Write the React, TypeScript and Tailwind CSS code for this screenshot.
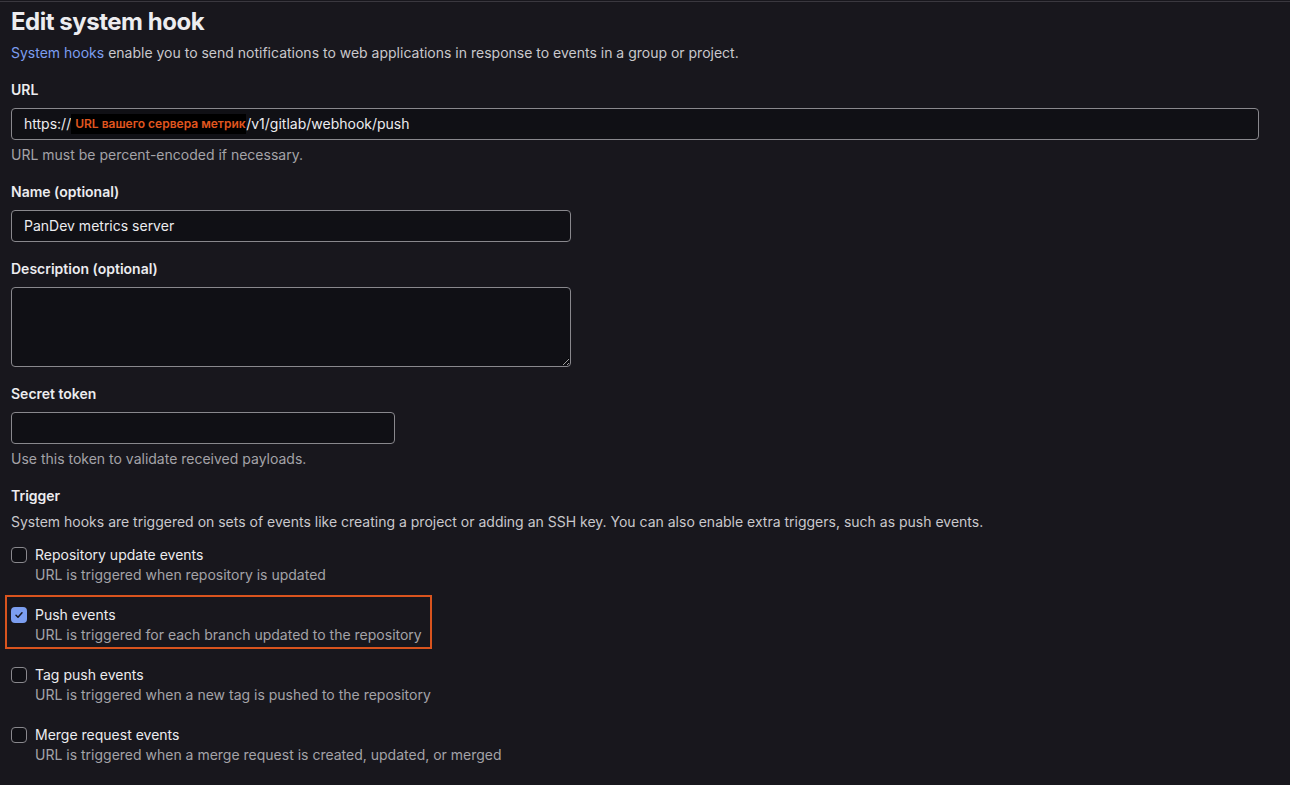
import React from "react";

const font = { fontFamily: "Inter, 'Noto Sans', sans-serif" };

function Check({ checked }: { checked?: boolean }) {
  if (checked) {
    return (
      <div className="mt-[2px] flex h-4 w-4 shrink-0 items-center justify-center rounded-[4px] bg-[#7c9ef0]">
        <svg width="10" height="10" viewBox="0 0 10 10" fill="none">
          <path d="M2 5.2 L4 7.2 L8 2.8" stroke="#18171d" strokeWidth="1.5" strokeLinecap="round" strokeLinejoin="round" />
        </svg>
      </div>
    );
  }
  return <div className="mt-[2px] h-4 w-4 shrink-0 rounded-[4px] border border-[#89888d] bg-[#101015]" />;
}

function Event({ title, desc, checked, highlight }: { title: string; desc: string; checked?: boolean; highlight?: boolean }) {
  return (
    <div className="relative flex gap-2">
      {highlight && <div className="pointer-events-none absolute left-[-6px] top-[-10px] h-[54px] w-[427px] border-2 border-[#d9541e]" />}
      <Check checked={checked} />
      <div className="flex flex-col">
        <span className="text-sm leading-5 text-[#ececef]">{title}</span>
        <span className="text-sm leading-5 text-[#a4a3a8]">{desc}</span>
      </div>
    </div>
  );
}

export default function App() {
  return (
    <div className="min-h-screen bg-[#18171d] pt-[1px]" style={font}>
      <div className="min-h-[784px] border-t border-[#3a383f] px-[11px] pt-[4px]">
        <h1 className="text-[24px] font-bold leading-8 tracking-[-0.02em] text-[#ececef]">Edit system hook</h1>
        <p className="mt-[5px] text-sm leading-5 text-[#c9c8cc]">
          <span className="text-[#7c9ef0]">System hooks</span> enable you to send notifications to web applications in response to events in a group or project.
        </p>

        <div className="mt-[17px]">
          <div className="text-sm font-semibold leading-5 text-[#ececef]">URL</div>
          <div className="mt-2 flex h-8 w-[1248px] items-center rounded-[4px] border border-[#89888d] bg-[#101015] px-3 text-sm text-[#ececef]">
            <span>https://</span>
            <span className="flex h-5 w-[175px] items-center bg-black pl-[4px] text-[12px] font-semibold text-[#e0561f]">URL вашего сервера метрик</span>
            <span>/v1/gitlab/webhook/push</span>
          </div>
          <div className="mt-[5px] text-sm leading-5 text-[#a4a3a8]">URL must be percent-encoded if necessary.</div>
        </div>

        <div className="mt-[17px]">
          <div className="text-sm font-semibold leading-5 text-[#ececef]">Name (optional)</div>
          <div className="mt-2 flex h-8 w-[560px] items-center rounded-[4px] border border-[#89888d] bg-[#101015] px-3 text-sm text-[#ececef]">
            PanDev metrics server
          </div>
        </div>

        <div className="mt-[17px]">
          <div className="text-sm font-semibold leading-5 text-[#ececef]">Description (optional)</div>
          <textarea
            className="mt-2 block h-20 w-[560px] resize-y rounded-[4px] border border-[#89888d] bg-[#101015] px-3 text-sm text-[#ececef] outline-none"
            defaultValue=""
          />
        </div>

        <div className="mt-[17px]">
          <div className="text-sm font-semibold leading-5 text-[#ececef]">Secret token</div>
          <div className="mt-2 h-8 w-[384px] rounded-[4px] border border-[#89888d] bg-[#101015]" />
          <div className="mt-[5px] text-sm leading-5 text-[#a4a3a8]">Use this token to validate received payloads.</div>
        </div>

        <div className="mt-[17px]">
          <div className="text-sm font-semibold leading-5 text-[#ececef]">Trigger</div>
          <div className="mt-[6px] text-sm leading-5 text-[#c9c8cc]">
            System hooks are triggered on sets of events like creating a project or adding an SSH key. You can also enable extra triggers, such as push events.
          </div>
        </div>

        <div className="mt-[13px] flex flex-col gap-5">
          <Event title="Repository update events" desc="URL is triggered when repository is updated" />
          <Event title="Push events" desc="URL is triggered for each branch updated to the repository" checked highlight />
          <Event title="Tag push events" desc="URL is triggered when a new tag is pushed to the repository" />
          <Event title="Merge request events" desc="URL is triggered when a merge request is created, updated, or merged" />
        </div>
      </div>
    </div>
  );
}
